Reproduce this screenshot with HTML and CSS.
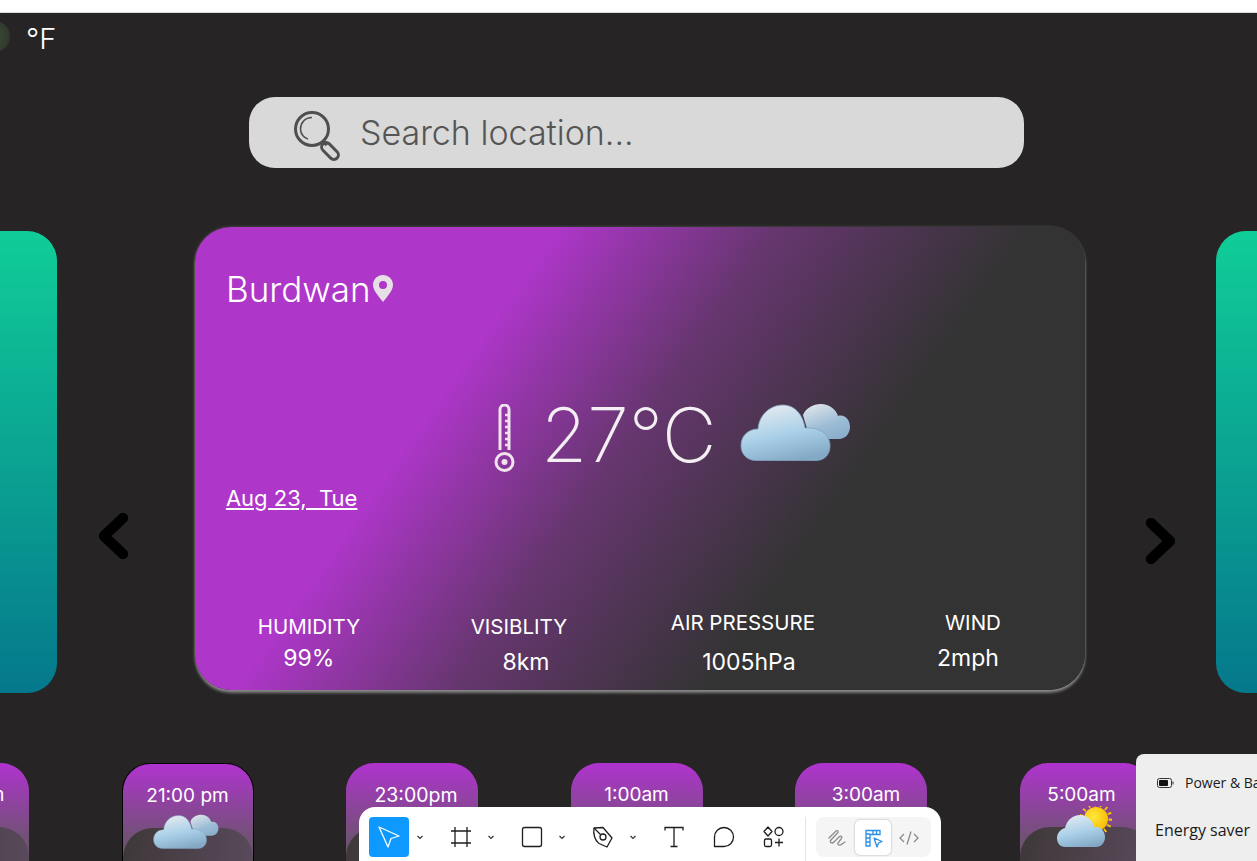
FILE: index.html
```html
<!DOCTYPE html>
<html lang="en">
  <head>
    <meta charset="utf-8" />
    <meta name="viewport" content="width=device-width, initial-scale=1" />
    <title>Weather</title>
    <link rel="stylesheet" href="styles.css">
  </head>
  <body>
    <!-- shared weather icons -->
    <svg class="defs" width="0" height="0">
      <defs>
        <linearGradient id="cloudFill" x1="0.25" y1="0" x2="0.6" y2="1">
          <stop offset="0" stop-color="#e6ebf0"/>
          <stop offset="0.55" stop-color="#a9d0e8"/>
          <stop offset="1" stop-color="#84a9c6"/>
        </linearGradient>
        <linearGradient id="cloudBack" x1="0.2" y1="0" x2="0.7" y2="1">
          <stop offset="0" stop-color="#dde4ea"/>
          <stop offset="0.6" stop-color="#9dbdd6"/>
          <stop offset="1" stop-color="#8aaecb"/>
        </linearGradient>
        <radialGradient id="sunFill" cx="0.4" cy="0.4" r="0.7">
          <stop offset="0" stop-color="#ffe83a"/>
          <stop offset="1" stop-color="#f8b800"/>
        </radialGradient>
        <symbol id="clouds" viewBox="0 0 111 58">
          <path fill="url(#cloudBack)" d="M63 12C66 5 73 1 81 1C89 1 96 6 98 13C105 11 110 17 110 24C110 31 105 36 99 36H70Z"/>
          <path fill="url(#cloudFill)" stroke="#7fa3bf" stroke-width="0.8" d="M16 57.500C7 57.500 1 51 1 42.500C1 33 8 26 18 26C19 12 30 2 43 2C55 2 63 12 65 25C78 24 90 30 90 43C90 52 84 57.500 76 57.500Z"/>
        </symbol>
        <symbol id="sunCloud" viewBox="0 0 56 43">
          <circle cx="40" cy="13" r="14.500" fill="none" stroke="#f8c400" stroke-width="4" stroke-dasharray="1.800 4.200"/>
          <circle cx="40" cy="13" r="12" fill="url(#sunFill)"/>
          <path fill="url(#cloudFill)" d="M9 41C4 41 1 37 1 32C1 27 5 23 9 22C11 14 17 9 24 9C31 9 37 14 38 21C44 20 49 25 49 31C49 37 45 41 40 41Z"/>
        </symbol>
      </defs>
    </svg>

    <div class="strip"></div>

    <div class="unit-row">
      <span class="knob"></span>
      <span class="unit">°F</span>
    </div>

    <div class="search">
      <svg class="search-icon" viewBox="0 0 52 52" fill="none" stroke="#4f4f4f">
        <circle cx="20" cy="20" r="16.500" stroke-width="3"/>
        <path d="M20 8.500C13 8.500 8.500 14 8.500 20C8.500 25 12 29 16 30" stroke-width="1.600"/>
        <path d="M31 32L35 36" stroke-width="3.500"/>
        <rect x="33.500" y="32" width="9" height="20" rx="4.500" transform="rotate(-45 38 42)" stroke-width="3"/>
      </svg>
      <span class="search-text">Search location...</span>
    </div>

    <div class="carousel">
      <div class="side side-left"></div>
      <svg class="arrow arrow-left" viewBox="0 0 30 46" fill="none" stroke="#000" stroke-width="10.500" stroke-linecap="round" stroke-linejoin="round"><path d="M25 5L6 23L25 41"/></svg>

      <div class="card">
        <div class="place">
          <span>Burdwan</span>
          <svg class="pin" viewBox="0 0 20 27"><path fill="#e6dfe4" fill-rule="evenodd" d="M10 0C4.500 0 0 4.400 0 9.800C0 15.500 6 22 10 27C14 22 20 15.500 20 9.800C20 4.400 15.500 0 10 0ZM10 6A4 4 0 1 1 10 14A4 4 0 1 1 10 6Z"/></svg>
        </div>
        <div class="now">
          <svg class="thermo" viewBox="0 0 21 68" fill="none" stroke="#f0e3ec" stroke-width="3">
            <path d="M6 46V5.500A4.500 4.500 0 0 1 15 5.500V46"/>
            <circle cx="10.500" cy="58" r="8.500"/>
            <circle cx="10.500" cy="58" r="3" fill="#f0e3ec" stroke="none"/>
            <path d="M11 11H15M11 17H15M11 23H15M11 29H15M11 35H15M11 41H15" stroke-width="2.500"/>
          </svg>
          <span class="temp">27°C</span>
          <svg class="now-icon"><use href="#clouds"/></svg>
        </div>
        <div class="date">Aug 23,&nbsp; Tue</div>
        <div class="stats">
          <div class="stat-humidity"><div>HUMIDITY</div><div class="val">99%</div></div>
          <div class="stat-visibility"><div>VISIBLITY</div><div class="val">8km</div></div>
          <div class="stat-pressure"><div>AIR PRESSURE</div><div class="val">1005hPa</div></div>
          <div class="stat-wind"><div>WIND</div><div class="val">2mph</div></div>
        </div>
      </div>

      <svg class="arrow arrow-right" viewBox="0 0 30 46" fill="none" stroke="#000" stroke-width="10.500" stroke-linecap="round" stroke-linejoin="round"><path d="M6 5L25 23L6 41"/></svg>
      <div class="side side-right"></div>
    </div>

    <div class="hours">
      <div class="hour"><div class="hour-time">19:00 pm</div><div class="hour-base"></div></div>
      <div class="hour active"><div class="hour-time">21:00 pm</div><svg class="hour-icon"><use href="#clouds"/></svg><div class="hour-base"></div></div>
      <div class="hour"><div class="hour-time shift-a">23:00pm</div><svg class="hour-icon"><use href="#clouds"/></svg><div class="hour-base"></div></div>
      <div class="hour"><div class="hour-time">1:00am</div><svg class="hour-icon"><use href="#clouds"/></svg><div class="hour-base"></div></div>
      <div class="hour"><div class="hour-time shift-b">3:00am</div><svg class="hour-icon"><use href="#clouds"/></svg><div class="hour-base"></div></div>
      <div class="hour"><div class="hour-time shift-c">5:00am</div><svg class="hour-icon sun"><use href="#sunCloud"/></svg><div class="hour-base"></div></div>
    </div>

    <!-- design tool toolbar sitting on top of the page -->
    <div class="toolbar">
      <div class="tool tool-on">
        <svg viewBox="0 0 40 40" fill="none" stroke="#fff" stroke-width="1.300" stroke-linejoin="round"><path d="M10 10L30 19L22 21.500L19 30Z"/></svg>
      </div>
      <svg class="chev" viewBox="0 0 20 40" fill="none" stroke="#333" stroke-width="1.200"><path d="M7.500 19L10 21.500L12.500 19"/></svg>
      <div class="tool">
        <svg viewBox="0 0 40 40" fill="none" stroke="#1e1e1e" stroke-width="1.300"><path d="M14 10V30M26 10V30M10 14H30M10 26H30"/></svg>
      </div>
      <svg class="chev" viewBox="0 0 20 40" fill="none" stroke="#333" stroke-width="1.200"><path d="M7.500 19L10 21.500L12.500 19"/></svg>
      <div class="tool">
        <svg viewBox="0 0 40 40" fill="none" stroke="#1e1e1e" stroke-width="1.300"><rect x="10.500" y="10.500" width="19" height="19" rx="2"/></svg>
      </div>
      <svg class="chev" viewBox="0 0 20 40" fill="none" stroke="#333" stroke-width="1.200"><path d="M7.500 19L10 21.500L12.500 19"/></svg>
      <div class="tool">
        <svg viewBox="0 0 40 40" fill="none" stroke="#1e1e1e" stroke-width="1.300" stroke-linejoin="round"><path d="M11 11L20 10.500L29 21L24 30L16 26.500C12 24 10 17 11 11Z"/><circle cx="20" cy="20" r="3"/><path d="M11 11L17.500 17.500"/></svg>
      </div>
      <svg class="chev" viewBox="0 0 20 40" fill="none" stroke="#333" stroke-width="1.200"><path d="M7.500 19L10 21.500L12.500 19"/></svg>
      <div class="tool">
        <svg viewBox="0 0 40 40" fill="none" stroke="#1e1e1e" stroke-width="1.300"><path d="M11 13.500V10.500H29V13.500M20 10.500V29.500M16.500 29.500H23.500"/></svg>
      </div>
      <div class="tool">
        <svg viewBox="0 0 40 40" fill="none" stroke="#1e1e1e" stroke-width="1.300" stroke-linejoin="round"><path d="M20 10.500A9.500 9.500 0 0 1 20 29.500H10.500V20A9.500 9.500 0 0 1 20 10.500Z"/></svg>
      </div>
      <div class="tool">
        <svg viewBox="0 0 40 40" fill="none" stroke="#1e1e1e" stroke-width="1.300" stroke-linejoin="round"><path d="M14 10L18 14.500L14 19L10 14.500Z"/><circle cx="25" cy="14.500" r="4"/><rect x="10.500" y="22" width="7" height="7.500" rx="1.500"/><path d="M25 21.500V29.500M21 25.500H29"/></svg>
      </div>
      <div class="tool-line"></div>
      <div class="modes">
        <div class="mode">
          <svg viewBox="0 0 36 36" fill="none" stroke="#8a8a8a" stroke-width="1.300" stroke-linecap="round"><path d="M10 18L17 11C19 9.500 20 12 18 13.500L12 20C10 22.500 13 24 15 22L20 17C22 15 24 17 22 19L19 23C18 25 21 26 23 24L26 22"/></svg>
        </div>
        <div class="mode mode-on">
          <svg viewBox="0 0 36 36" fill="none" stroke="#2a8fe8" stroke-width="1.300"><path d="M11 26V10.500H25V14.500H15V26ZM15 14.500V26M11 14H15M11 18H15M11 22H15M18 10.500V14.500M21.500 10.500V14.500"/><path d="M19 18L27 21.500L23.500 23L22 27Z" stroke-linejoin="round"/></svg>
        </div>
        <div class="mode">
          <svg viewBox="0 0 36 36" fill="none" stroke="#8a8a8a" stroke-width="1.300"><path d="M13 14L9 18L13 22M23 14L27 18L23 22M20 11.500L16 24.500"/></svg>
        </div>
      </div>
    </div>

    <!-- windows power flyout -->
    <div class="flyout">
      <div class="flyout-head">
        <svg class="battery" viewBox="0 0 17 10"><rect x="0.500" y="0.500" width="14" height="9" rx="2" fill="#eee" stroke="#333"/><rect x="2" y="2" width="9" height="6" rx="1" fill="#111"/><rect x="15.500" y="3.500" width="1" height="3" fill="#333"/></svg>
        <span>Power &amp; Battery</span>
      </div>
      <div class="flyout-row">Energy saver</div>
    </div>
  </body>
</html>
```

FILE: styles.css
```css
*{
  box-sizing: border-box;
}

body{
  margin: 0;
  width: 1257px;
  height: 861px;
  overflow: hidden;
  position: relative;
  background-color: #262425;
  color: #fff;
  font-family: "Inter", "Open Sans", sans-serif;
}

.defs{
  position: absolute;
}

.strip{
  height: 13px;
  background-color: #fff;
  border-bottom: 1px solid #ddd;
}

/* unit toggle */
.unit-row{
  display: flex;
  align-items: center;
  height: 31px;
  margin-top: 8px;
  margin-left: -21px;
}

.knob{
  width: 31px;
  height: 31px;
  border-radius: 50%;
  background: radial-gradient(circle at 30% 50%, #3b5135, #34402f 60%, #2b2d2a);
}

.unit{
  margin: 4px 0 0 16px;
  font-size: 29px;
  font-weight: 300;
}

/* search */
.search{
  display: flex;
  align-items: center;
  width: 775px;
  height: 71px;
  margin: 45px 0 0 249px;
  padding-left: 43px;
  border-radius: 26px;
  background-color: #d9d9d9;
}

.search-icon{
  width: 52px;
  height: 52px;
  margin-top: 4px;
}

.search-text{
  margin-left: 16px;
  font-size: 34px;
  font-weight: 300;
  color: #555;
}

/* carousel */
.carousel{
  display: flex;
  align-items: flex-start;
  height: 466px;
  margin-top: 59px;
}

.side{
  height: 462px;
  margin-top: 4px;
  background: linear-gradient(180deg, #10cd98, #05788c);
}

.side-left{
  width: 57px;
  border-radius: 0 30px 30px 0;
}

.side-right{
  width: 41px;
  margin-left: 41px;
  border-radius: 30px 0 0 30px;
}

.arrow{
  width: 30px;
  height: 46px;
}

.arrow-left{
  margin: 286px 67px 0 41px;
}

.arrow-right{
  margin: 291px 0 0 60px;
}

.card{
  display: flex;
  flex-direction: column;
  width: 891px;
  height: 463px;
  padding: 48px 31px 0;
  border-radius: 36px;
  background: linear-gradient(125deg, #ae36c9 30%, #66366f 48%, #333 69%);
  box-shadow: 0 3px 3px rgba(255, 255, 255, 0.4), 0 0 3px rgba(255, 255, 255, 0.25);
}

.place{
  display: flex;
  align-items: center;
  height: 27px;
  font-size: 35px;
  font-weight: 300;
}

.pin{
  width: 20px;
  height: 27px;
  margin-left: 2px;
}

.now{
  display: flex;
  align-items: center;
  height: 70px;
  margin: 101px 0 0 268px;
}

.thermo{
  width: 21px;
  height: 68px;
}

.temp{
  margin: -8px 0 0 26px;
  font-size: 75px;
  font-weight: 250;
  color: #f4eff3;
}

.now-icon{
  width: 111px;
  height: 58px;
  margin: -13px 0 0 24px;
}

.date{
  margin-top: 12px;
  font-size: 22px;
  text-decoration: underline;
}

.stats{
  display: flex;
  margin-top: 103px;
  font-size: 20.500px;
  text-align: center;
}

.val{
  font-size: 23px;
}

.stat-humidity{
  width: 166px;
}

.stat-humidity .val{
  margin-top: 5px;
}

.stat-visibility{
  width: 110px;
  margin-left: 72px;
}

.stat-visibility .val{
  margin-top: 9px;
  padding-left: 14px;
}

.stat-pressure{
  width: 146px;
  margin-left: 96px;
  margin-top: -4px;
}

.stat-pressure .val{
  margin-top: 13px;
  padding-left: 12px;
}

.stat-wind{
  width: 70px;
  margin-left: 122px;
  margin-top: -4px;
}

.stat-wind .val{
  margin: 9px 0 0 -10px;
}

/* hourly row */
.hours{
  display: flex;
  gap: 92.500px;
  margin: 70px 0 0 -103px;
}

.hour{
  position: relative;
  flex: none;
  width: 132px;
  height: 110px;
  overflow: hidden;
  border-radius: 28px 28px 0 0;
  background: linear-gradient(180deg, #b033cf, #6f5272 70%);
  text-align: center;
}

.hour.active{
  border: 1px solid #000;
  border-bottom: 0;
}

.hour-time{
  margin-top: 20px;
  font-size: 19px;
  line-height: 24px;
}

.shift-a{
  padding-left: 8px;
  font-size: 19.500px;
}

.shift-b{
  padding-left: 10px;
}

.shift-c{
  padding-right: 8px;
}

.hour-icon{
  position: absolute;
  z-index: 1;
  left: 30px;
  top: 47px;
  width: 66px;
  height: 41px;
}

.hour-icon.sun{
  left: 36px;
  top: 43px;
  width: 56px;
  height: 43px;
}

.hour-base{
  position: absolute;
  left: 0;
  right: 0;
  top: 64px;
  bottom: 0;
  border-radius: 30px 30px 0 0;
  background: linear-gradient(100deg, #3e3838, #5a4a5c);
}

/* toolbar */
.toolbar{
  position: absolute;
  z-index: 2;
  left: 359px;
  bottom: 0;
  display: flex;
  align-items: flex-start;
  width: 582px;
  height: 54px;
  padding: 10px 0 0 10px;
  border-radius: 16px 16px 0 0;
  background-color: #fff;
}

.tool{
  flex: none;
  width: 40px;
  height: 40px;
  border-radius: 4px;
}

.tool svg{
  display: block;
  width: 40px;
  height: 40px;
}

.tool-on{
  background-color: #0d99ff;
}

.chev{
  flex: none;
  width: 20px;
  height: 40px;
}

.tool-on + .chev{
  margin-left: 1px;
}

.chev + .tool{
  margin-left: 11px;
}

.tool + .tool{
  margin-left: 10px;
}

.tool-line{
  width: 1px;
  height: 44px;
  margin: 0 10px 0 11px;
  background-color: #e5e5e5;
}

.modes{
  display: flex;
  align-items: center;
  width: 115px;
  height: 40px;
  padding: 0 3px;
  border-radius: 8px;
  background-color: #f5f5f5;
}

.mode{
  width: 36px;
  height: 35px;
}

.mode svg{
  display: block;
  width: 36px;
  height: 36px;
}

.mode-on{
  border-radius: 5px;
  background-color: #fff;
  box-shadow: 0 0 2px rgba(0, 0, 0, 0.35);
}

/* windows flyout */
.flyout{
  position: absolute;
  z-index: 2;
  left: 1136px;
  top: 754px;
  width: 180px;
  height: 120px;
  padding: 19px 0 0 21px;
  border-radius: 8px;
  background-color: #eee;
  color: #1a1a1a;
  font-family: "Open Sans", sans-serif;
}

.flyout-head{
  display: flex;
  align-items: center;
  font-size: 14px;
}

.battery{
  width: 17px;
  height: 10px;
  margin-right: 11px;
}

.flyout-row{
  margin: 27px 0 0 -2px;
  font-size: 16px;
}
```
